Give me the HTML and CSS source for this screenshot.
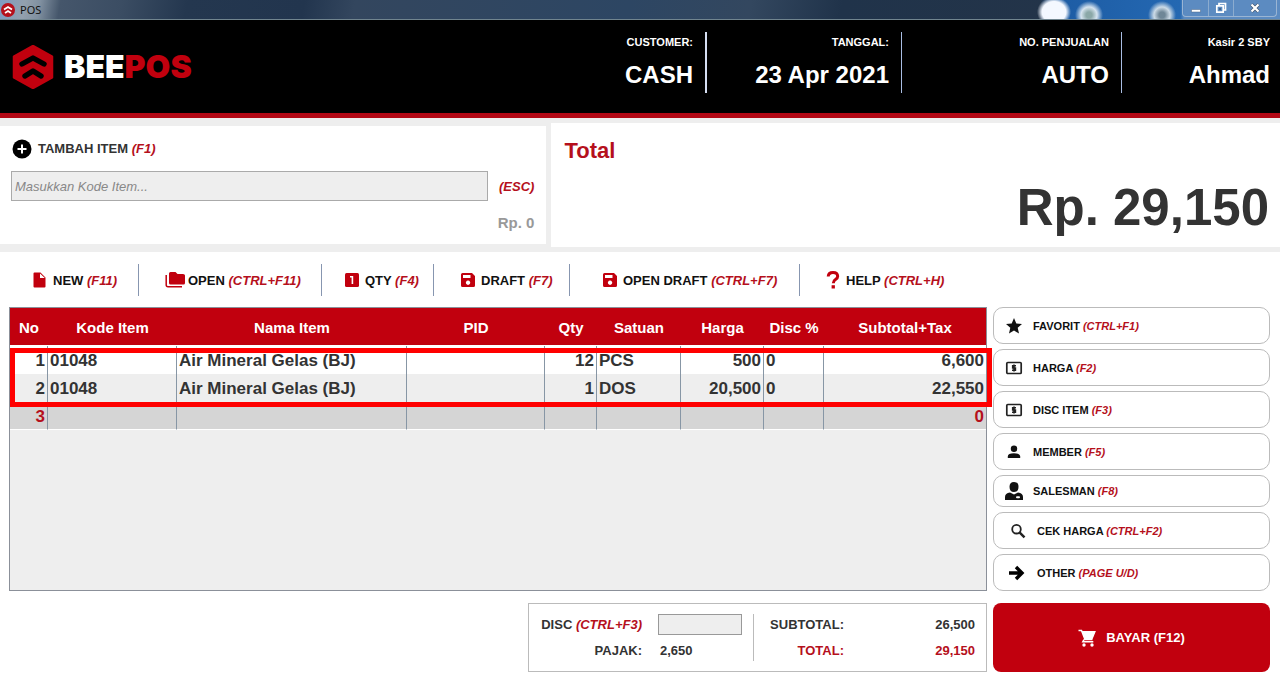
FILE: index.html
```html
<!DOCTYPE html>
<html lang="id">
<head>
<meta charset="utf-8">
<title>POS</title>
<link rel="stylesheet" href="styles.css">
</head>
<body>
<div class="titlebar">
  <svg class="app-icon" viewBox="0 0 14 14"><circle cx="7" cy="7" r="7" fill="#b5101c"/><path d="M3 6.500 7 4l4 2.500M4 10l3-2 3 2" fill="none" stroke="#fff" stroke-width="1.800"/></svg>
  <span class="app-title">POS</span>
  <div class="window-controls">
    <button class="win-btn" aria-label="Minimize"><svg viewBox="0 0 12 12"><path d="M1.500 7.500h9v2.500h-9z" fill="#fff" stroke="#4a6484" stroke-width=".5"/></svg></button>
    <button class="win-btn" aria-label="Restore"><svg viewBox="0 0 12 12"><path d="M4 3V1.500h6.500V8H9M1.800 3.800h6.400v6.400H1.800z" fill="none" stroke="#fff" stroke-width="1.700"/><path d="M4 6h2v2H4z" fill="#42648c"/></svg></button>
    <button class="win-btn win-close" aria-label="Close"><svg viewBox="0 0 12 12"><path d="m2.500 2.500 7 7m0-7-7 7" stroke="#42566f" stroke-width="3.500"/><path d="m2.500 2.500 7 7m0-7-7 7" stroke="#fff" stroke-width="2.200"/></svg></button>
  </div>
</div>

<header class="header">
  <div class="brand">
    <svg class="brand-mark" viewBox="0 0 42 44"><path d="M21 1 40 11.500v21L21 43 2 32.500v-21z" fill="#c1000e" stroke="#c1000e" stroke-width="2.500" stroke-linejoin="round"/><path d="m10 19 11-6 11 6M13 31l8-5 8 5" fill="none" stroke="#000" stroke-width="5.400" stroke-linecap="round" stroke-linejoin="round"/></svg>
    <span class="brand-name">BEE<span class="brand-accent">POS</span></span>
  </div>
  <div class="info info-customer"><span class="info-label">CUSTOMER:</span><span class="info-value">CASH</span></div>
  <div class="info info-date"><span class="info-label">TANGGAL:</span><span class="info-value">23 Apr 2021</span></div>
  <div class="info info-number"><span class="info-label">NO. PENJUALAN</span><span class="info-value">AUTO</span></div>
  <div class="info info-user"><span class="info-label">Kasir 2 SBY</span><span class="info-value">Ahmad</span></div>
</header>

<section class="panels">
  <div class="entry">
    <label class="entry-label" for="item-code">
      <svg class="icon-plus" viewBox="0 0 20 20"><circle cx="10" cy="10" r="9.500" fill="#000"/><path d="M10 5.500v9M5.500 10h9" stroke="#fff" stroke-width="2"/></svg>
      <span>TAMBAH ITEM <em>(F1)</em></span>
    </label>
    <div class="entry-row">
      <input class="entry-input" id="item-code" type="text" placeholder="Masukkan Kode Item...">
      <em>(ESC)</em>
    </div>
    <div class="entry-price">Rp. 0</div>
  </div>
  <div class="total">
    <h1 class="total-label">Total</h1>
    <div class="total-value">Rp. 29,150</div>
  </div>
</section>

<nav class="toolbar">
  <button class="tool tool-new"><svg viewBox="0 0 16 16"><path d="M2.500.5h6l5 5v9q0 1-1 1h-10q-1 0-1-1v-13q0-1 1-1zM8 1.500V6h4.800z" fill="#c1000e" fill-rule="evenodd"/></svg><span>NEW <em>(F11)</em></span></button>
  <button class="tool tool-open"><svg class="wide" viewBox="0 0 20 16"><path d="M5.500 0h5l2 2H18q2 0 2 1.500V11q0 1.500-1.500 1.500h-13Q4 12.500 4 11V1.500Q4 0 5.500 0z" fill="#c1000e"/><path d="M1.200 3v10q0 1.700 1.800 1.700h14" fill="none" stroke="#c1000e" stroke-width="1.500"/></svg><span>OPEN <em>(CTRL+F11)</em></span></button>
  <button class="tool tool-qty"><svg viewBox="0 0 16 16"><rect x="1" y="1" width="14" height="14" rx="1.500" fill="#c1000e"/><path d="M6 4.800h2.400V12" fill="none" stroke="#fff" stroke-width="1.600"/></svg><span>QTY <em>(F4)</em></span></button>
  <button class="tool tool-draft"><svg viewBox="0 0 16 16"><path d="M2.500 1H12l3 3v9.500q0 1.500-1.500 1.500h-11Q1 15 1 13.500v-11Q1 1 2.500 1zM3 3v3h7.500V3zm5 5.500a2.200 2.200 0 1 0 .1 0z" fill="#c1000e" fill-rule="evenodd"/></svg><span>DRAFT <em>(F7)</em></span></button>
  <button class="tool tool-open-draft"><svg viewBox="0 0 16 16"><path d="M2.500 1H12l3 3v9.500q0 1.500-1.500 1.500h-11Q1 15 1 13.500v-11Q1 1 2.500 1zM3 3v3h7.500V3zm5 5.500a2.200 2.200 0 1 0 .1 0z" fill="#c1000e" fill-rule="evenodd"/></svg><span>OPEN DRAFT <em>(CTRL+F7)</em></span></button>
  <button class="tool tool-help"><svg class="tall" viewBox="0 0 14 18"><path d="M2.200 5.500Q2.500 1.600 7 1.600t4.700 3.700Q11.700 7.200 9.500 8.600 7.300 10 7.300 12.300" fill="none" stroke="#c1000e" stroke-width="3"/><path d="M5.600 14.200h3.300v3.300H5.600z" fill="#c1000e"/></svg><span>HELP <em>(CTRL+H)</em></span></button>
</nav>

<main class="workspace">
  <div class="items">
    <table class="items-table">
      <colgroup><col class="c-no"><col class="c-code"><col><col class="c-pid"><col class="c-qty"><col class="c-unit"><col class="c-price"><col class="c-disc"><col class="c-sub"></colgroup>
      <thead><tr><th>No</th><th>Kode Item</th><th>Nama Item</th><th>PID</th><th>Qty</th><th>Satuan</th><th>Harga</th><th>Disc %</th><th>Subtotal+Tax</th></tr></thead>
      <tbody>
        <tr><td class="num">1</td><td>01048</td><td>Air Mineral Gelas (BJ)</td><td></td><td class="num">12</td><td>PCS</td><td class="num">500</td><td>0</td><td class="num">6,600</td></tr>
        <tr class="alt"><td class="num">2</td><td>01048</td><td>Air Mineral Gelas (BJ)</td><td></td><td class="num">1</td><td>DOS</td><td class="num">20,500</td><td>0</td><td class="num">22,550</td></tr>
        <tr class="next"><td class="num">3</td><td></td><td></td><td></td><td></td><td></td><td></td><td></td><td class="num">0</td></tr>
      </tbody>
    </table>
    <div class="highlight"></div>
  </div>

  <aside class="actions">
    <button class="action"><svg viewBox="0 0 18 18"><path d="m9 1 2.300 5.400 5.700.5-4.300 3.900 1.300 5.700-5-3-5 3 1.300-5.700L1 6.900l5.700-.5z" fill="#111"/></svg><span>FAVORIT <em>(CTRL+F1)</em></span></button>
    <button class="action"><svg viewBox="0 0 18 18"><rect x="1.800" y="3.500" width="14.400" height="11" rx="1" fill="none" stroke="#222" stroke-width="1.700"/><path d="M11 6.700H7.700V9h2.700v2.300H7M9 5.500v7" fill="none" stroke="#222" stroke-width="1.600"/></svg><span>HARGA <em>(F2)</em></span></button>
    <button class="action"><svg viewBox="0 0 18 18"><rect x="1.800" y="3.500" width="14.400" height="11" rx="1" fill="none" stroke="#222" stroke-width="1.700"/><path d="M11 6.700H7.700V9h2.700v2.300H7M9 5.500v7" fill="none" stroke="#222" stroke-width="1.600"/></svg><span>DISC ITEM <em>(F3)</em></span></button>
    <button class="action"><svg viewBox="0 0 18 18"><circle cx="9" cy="5.700" r="3.200" fill="#111"/><path d="M2.800 15v-1.500q0-3.200 6.200-3.200t6.200 3.200V15z" fill="#111"/></svg><span>MEMBER <em>(F5)</em></span></button>
    <button class="action action-short"><svg viewBox="0 0 18 18"><path d="M4.500 4.800Q4.500 0 9 0t4.500 4.800Q13.500 10 9 10T4.500 4.800zM0 18v-3q0-4 5-4.500l4 2 4-2q5 .5 5 4.500v3z" fill="#111"/><rect x="11" y="14.200" width="4" height="2" rx="1" fill="#fff"/></svg><span>SALESMAN <em>(F8)</em></span></button>
    <button class="action action-inset"><svg viewBox="0 0 18 18"><circle cx="7.500" cy="7.200" r="4.300" fill="none" stroke="#222" stroke-width="1.800"/><path d="m10.500 10.300 5 5" stroke="#222" stroke-width="2.400"/></svg><span>CEK HARGA <em>(CTRL+F2)</em></span></button>
    <button class="action action-inset"><svg viewBox="0 0 18 18"><path d="M0 9h12M7 3l6 6-6 6" fill="none" stroke="#000" stroke-width="3.400"/></svg><span>OTHER <em>(PAGE U/D)</em></span></button>
  </aside>

  <section class="summary">
    <div class="summary-left">
      <label for="disc">DISC <em>(CTRL+F3)</em></label>
      <input class="disc-input" id="disc" type="text">
      <span>PAJAK:</span>
      <span class="tax">2,650</span>
    </div>
    <div class="summary-right">
      <span>SUBTOTAL:</span><span>26,500</span>
      <span class="red">TOTAL:</span><span class="red">29,150</span>
    </div>
  </section>

  <button class="pay"><svg viewBox="0 0 18 18"><path d="M.5 1.500h3L7 10.500h7.500M4 2.800h12.800L14 9.500H6.800M6 10.500l-1.200 2.300h10.500" fill="none" stroke="#fff" stroke-width="1.500"/><path d="M4 2.800h13L14.300 9.500H6.800z" fill="#fff"/><circle cx="6" cy="16" r="1.700" fill="#fff"/><circle cx="14" cy="16" r="1.700" fill="#fff"/></svg><span>BAYAR (F12)</span></button>
</main>
</body>
</html>
```
FILE: styles.css
```css
* {
  box-sizing: border-box;
}

body {
  margin: 0;
  min-height: 100vh;
  display: flex;
  flex-direction: column;
  background: #fff;
  color: #333;
  font: bold 13px/16px "Liberation Sans", Arial, sans-serif;
}

button,
input {
  margin: 0;
  font: inherit;
  color: inherit;
}

button {
  padding: 0;
  border: 0;
  background: none;
  text-align: left;
}

em,
.red {
  color: #b5101c;
}

/* Window title bar */
.titlebar {
  display: flex;
  align-items: center;
  height: 20px;
  padding-left: 1px;
  border-bottom: 1px solid #71858f;
  background:
    radial-gradient(ellipse 17px 15px at calc(100% - 226px) 12px, #f4f8ff 70%, transparent),
    radial-gradient(circle at calc(100% - 191px) 15px, #8ba8a8 3px, #d5e3ef 8px, transparent 14px),
    radial-gradient(circle at calc(100% - 118px) 15px, #6f8797 3px, #ccdbe7 8px, transparent 14px),
    linear-gradient(90deg, transparent calc(100% - 240px), #1d5ca4 calc(100% - 224px), #2468b2 calc(100% - 100px), #5c8bc1 calc(100% - 96px)),
    linear-gradient(100deg, #7d9cc4 0, #93a0ad 25px, #8090a0 40px, #45566b 60px, #3b4d63 120px, #24374f 185px, #22354e 300px, #33465e 350px, #2d4663 620px, #33475f 740px, #20334a 830px, #233449 1040px);
  color: #111;
}

.app-icon {
  width: 14px;
  height: 14px;
}

.app-title {
  flex: 1;
  margin-left: 5px;
  font: 11px/16px "Noto Sans", sans-serif;
}

.window-controls {
  display: flex;
  align-self: flex-start;
  height: 17px;
  margin-right: 3px;
  border: 1px solid #9ab5d4;
  border-top: 0;
  border-radius: 0 0 4px 4px;
}

.win-btn {
  display: flex;
  align-items: center;
  justify-content: center;
  width: 25px;
}

.win-btn + .win-btn {
  border-left: 1px solid #8caccf;
}

.win-close {
  width: 43px;
}

.win-btn svg {
  width: 12px;
  height: 12px;
}

/* Header */
.header {
  display: flex;
  align-items: flex-start;
  height: 98px;
  padding-top: 12px;
  border-bottom: 5px solid #b30815;
  background: #000;
  color: #fff;
}

.brand {
  flex: 1;
  display: flex;
  align-items: center;
  gap: 10px;
  padding: 13px 0 0 12px;
}

.brand-mark {
  width: 42px;
  height: 44px;
}

.brand-name {
  font: 900 32px/44px Inter, sans-serif;
}

.brand-accent {
  color: #c1000e;
}

.info {
  display: flex;
  flex-direction: column;
  gap: 9px;
  height: 61px;
  padding: 2px 12px 0 0;
  border-right: 1px solid #a9bde2;
  text-align: right;
}

.info-customer {
  border-right: 2px solid #d5def2;
}

.info-date {
  width: 195px;
}

.info-number {
  width: 220px;
}

.info-user {
  width: 158px;
  padding-right: 10px;
  border-right: 0;
}

.info-label {
  font-size: 11px;
  line-height: 16px;
}

.info-value {
  font-size: 24px;
  line-height: 32px;
}

/* Item entry and grand total */
.panels {
  display: grid;
  grid-template-columns: minmax(0, 3fr) minmax(0, 4fr);
  gap: 5px;
  padding: 5px 0;
  background: #eee;
}

.entry {
  margin: 3px 0;
  padding: 13px 12px 13px 11px;
  background: #fff;
}

.entry-label {
  display: flex;
  align-items: center;
  gap: 6px;
  margin-left: 1px;
}

.icon-plus {
  width: 20px;
  height: 20px;
}

.entry-row {
  display: flex;
  align-items: center;
  gap: 11px;
  margin-top: 12px;
}

.entry-input {
  flex: 1;
  min-width: 0;
  height: 30px;
  padding: 0 3px;
  border: 1px solid #aaa;
  border-radius: 0;
  background: #eee;
  font-weight: normal;
}

.entry-row em {
  padding-top: 2px;
}

.entry-input::placeholder {
  color: #888;
  font-style: italic;
}

.entry-price {
  margin-top: 14px;
  color: #999;
  font-size: 15px;
  text-align: right;
}

.total {
  padding: 15px 11px 0 13px;
  background: #fff;
}

.total-label {
  margin: 0;
  color: #b5101c;
  font-size: 22px;
  line-height: 26px;
}

.total-value {
  margin-top: 14px;
  font-size: 51px;
  line-height: 60px;
  text-align: right;
}

/* Toolbar */
.toolbar {
  display: flex;
  padding: 12px 0 11px;
}

.tool {
  display: flex;
  align-items: center;
  gap: 5px;
  height: 32px;
  border-right: 1px solid #8796b0;
  color: #111;
  white-space: nowrap;
}

.tool span {
  padding-top: 2px;
}

.tool svg {
  width: 16px;
  height: 16px;
}

.tool .wide {
  width: 20px;
}

.tool .tall {
  width: 14px;
  height: 18px;
}

.tool-new {
  width: 139px;
  padding-left: 32px;
}

.tool-open {
  width: 183px;
  gap: 3px;
  padding-left: 26px;
}

.tool-qty {
  width: 112px;
  padding-left: 22px;
}

.tool-draft {
  width: 136px;
  padding-left: 26px;
}

.tool-open-draft {
  width: 230px;
  padding-left: 32px;
}

.tool-help {
  gap: 6px;
  padding-left: 26px;
  border-right: 0;
}

/* Workspace */
.workspace {
  flex: 1;
  display: grid;
  grid-template-columns: minmax(0, 1fr) 277px;
  grid-template-rows: 1fr auto;
  gap: 12px 6px;
  padding: 0 10px 9px 9px;
}

.items {
  position: relative;
  border: 1px solid #8b9099;
  background: #eee;
}

.items-table {
  width: 100%;
  table-layout: fixed;
  border-collapse: separate;
  border-spacing: 0;
}

.c-no { width: 38px; }
.c-code { width: 129px; }
.c-pid { width: 138px; }
.c-qty { width: 52px; }
.c-unit { width: 84px; }
.c-price { width: 83px; }
.c-disc { width: 60px; }
.c-sub { width: 162px; }

.items-table th {
  height: 38px;
  padding: 2px 0 0;
  border-bottom: 1px solid #fff;
  background: #c1000e;
  color: #fff;
  font-size: 15px;
}

.items-table td {
  height: 28px;
  padding: 2px 2px 0;
  border-right: 1px solid #8796a5;
  background: #fff;
  font-size: 17px;
  line-height: 20px;
}

.items-table td:last-child {
  border-right: 0;
}

.items-table .alt td {
  background: #eee;
}

.items-table .next td {
  border-bottom: 1px solid #fff;
  background: #d5d5d5;
  color: #b5101c;
}

.items-table .num {
  text-align: right;
}

.highlight {
  position: absolute;
  top: 40px;
  left: 0;
  right: -6px;
  height: 59px;
  border: 5px solid #f00;
  pointer-events: none;
}

/* Side actions */
.actions {
  display: flex;
  flex-direction: column;
  gap: 5px;
}

.action {
  display: flex;
  align-items: center;
  gap: 10px;
  height: 37px;
  padding-left: 11px;
  border: 1px solid #bbb;
  border-radius: 10px;
  background: #fff;
  color: #111;
  font-size: 11px;
}

.action svg {
  width: 18px;
  height: 18px;
}

.action-short {
  height: 32px;
}

.action-inset {
  padding-left: 15px;
}

/* Totals */
.summary {
  justify-self: end;
  display: flex;
  align-items: center;
  width: 459px;
  padding: 10px 11px;
  border: 1px solid #bbb;
}

.summary-left {
  display: grid;
  grid-template-columns: 102px 84px;
  grid-auto-rows: 21px;
  gap: 5px 16px;
  align-items: center;
  padding-right: 11px;
  border-right: 1px solid #bbb;
  text-align: right;
  white-space: nowrap;
}

.disc-input {
  width: 84px;
  height: 21px;
  border: 1px solid #999;
  border-radius: 0;
  background: #eee;
}

.tax {
  padding-left: 2px;
  text-align: left;
}

.summary-right {
  flex: 1;
  display: grid;
  grid-template-columns: 90px 1fr;
  grid-auto-rows: 21px;
  gap: 5px 0;
  align-items: center;
  text-align: right;
}

.pay {
  display: flex;
  align-items: center;
  justify-content: center;
  gap: 10px;
  min-height: 68px;
  border-radius: 8px;
  background: #c1000e;
  color: #fff;
}

.pay svg {
  width: 18px;
  height: 18px;
}
```
